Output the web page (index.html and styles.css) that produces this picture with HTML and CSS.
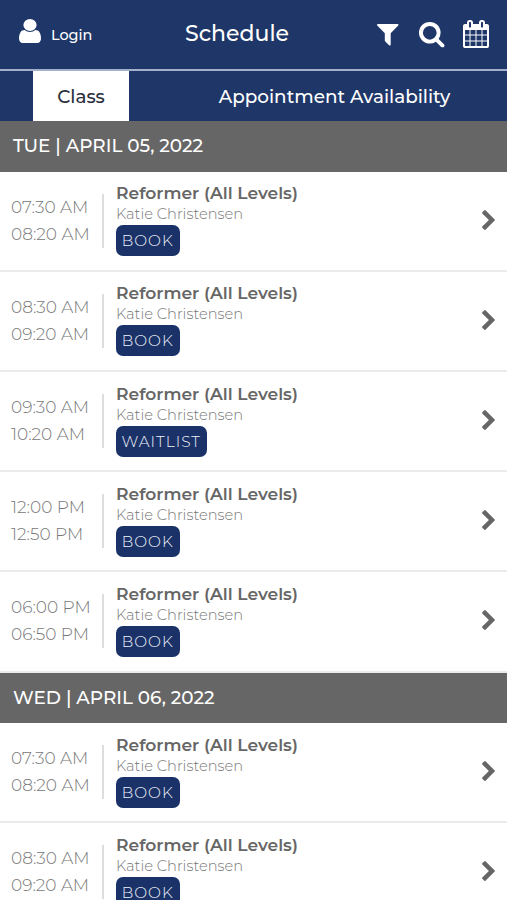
FILE: index.html
```html
<!DOCTYPE html>
<html lang="en">
<head>
    <meta charset="UTF-8">
    <meta name="viewport" content="width=device-width, initial-scale=1.0">
    <title>Schedule</title>
    <link rel="stylesheet" href="styles.css">
</head>
<body>

    <!-- Icons -->
    <svg class="sprite" xmlns="http://www.w3.org/2000/svg">
        <symbol id="user" viewBox="256 128 1280 1536" preserveAspectRatio="none"><path d="M1536 1399q0 109-62.5 187t-150.5 78h-854q-88 0-150.5-78t-62.5-187q0-85 8.5-160.5t31.5-152 58.5-131 94-89 134.5-34.5q131 128 313 128t313-128q76 0 134.5 34.5t94 89 58.5 131 31.5 152 8.5 160.5zm-256-887q0 159-112.5 271.5t-271.5 112.5-271.5-112.5-112.5-271.5 112.5-271.5 271.5-112.5 271.5 112.5 112.5 271.5z"/></symbol>
        <symbol id="filter" viewBox="0 0 1792 1792"><path d="M1595 295q17 41-14 70l-493 493v742q0 42-39 59-13 5-25 5-27 0-45-19l-256-256q-19-19-19-45v-486l-493-493q-31-29-14-70 17-39 59-39h1280q42 0 59 39z"/></symbol>
        <symbol id="search" viewBox="0 0 1792 1792"><path d="M1216 832q0-185-131.5-316.5t-316.5-131.5-316.5 131.5-131.5 316.5 131.5 316.5 316.5 131.5 316.5-131.5 131.5-316.5zm512 832q0 52-38 90t-90 38q-54 0-90-38l-343-342q-179 124-399 124-143 0-273.5-55.5t-225-150-150-225-55.5-273.5 55.5-273.5 150-225 225-150 273.5-55.5 273.5 55.5 225 150 150 225 55.5 273.5q0 220-124 399l343 343q37 37 37 90z"/></symbol>
        <symbol id="calendar" viewBox="0 0 1792 1792"><path d="M192 1664h288v-288h-288v288zm352 0h320v-288h-320v288zm-352-352h288v-320h-288v320zm352 0h320v-320h-320v320zm-352-384h288v-288h-288v288zm736 736h320v-288h-320v288zm-384-736h320v-288h-320v288zm768 736h288v-288h-288v288zm-384-352h320v-320h-320v320zm-352-864v-288q0-13-9.5-22.5t-22.5-9.5h-64q-13 0-22.5 9.5t-9.5 22.5v288q0 13 9.5 22.5t22.5 9.5h64q13 0 22.5-9.5t9.5-22.5zm736 864h288v-320h-288v320zm-384-384h320v-288h-320v288zm384 0h288v-288h-288v288zm32-480v-288q0-13-9.5-22.5t-22.5-9.5h-64q-13 0-22.5 9.5t-9.5 22.5v288q0 13 9.5 22.5t22.5 9.5h64q13 0 22.5-9.5t9.5-22.5zm384-64v1280q0 52-38 90t-90 38h-1408q-52 0-90-38t-38-90v-1280q0-52 38-90t90-38h128v-96q0-66 47-113t113-47h64q66 0 113 47t47 113v96h384v-96q0-66 47-113t113-47h64q66 0 113 47t47 113v96h128q52 0 90 38t38 90z"/></symbol>
        <symbol id="chevron" viewBox="346 26 1036 1612"><path d="M1363 877l-742 742q-19 19-45 19t-45-19l-166-166q-19-19-19-45t19-45l531-531-531-531q-19-19-19-45t19-45l166-166q19-19 45-19t45 19l742 742q19 19 19 45t-19 45z"/></symbol>
    </svg>

    <!-- Header -->
    <header class="header">
        <a class="login" href="#">
            <svg class="icon-user"><use href="#user"/></svg>
            <span>Login</span>
        </a>
        <h1>Schedule</h1>
        <div class="actions">
            <svg class="icon"><use href="#filter"/></svg>
            <svg class="icon"><use href="#search"/></svg>
            <svg class="icon icon-cal"><use href="#calendar"/></svg>
        </div>
    </header>

    <!-- Tabs -->
    <nav class="tabs">
        <a class="tab active" href="#">Class</a>
        <a class="tab tab-wide" href="#">Appointment Availability</a>
    </nav>

    <h2 class="date">TUE | APRIL 05, 2022</h2>
    <div class="row">
        <div class="time"><span>07:30 AM</span><span>08:20 AM</span></div>
        <div class="info">
            <h3>Reformer (All Levels)</h3>
            <p>Katie Christensen</p>
            <button class="btn">BOOK</button>
        </div>
        <svg class="chevron"><use href="#chevron"/></svg>
    </div>
    <div class="row">
        <div class="time"><span>08:30 AM</span><span>09:20 AM</span></div>
        <div class="info">
            <h3>Reformer (All Levels)</h3>
            <p>Katie Christensen</p>
            <button class="btn">BOOK</button>
        </div>
        <svg class="chevron"><use href="#chevron"/></svg>
    </div>
    <div class="row">
        <div class="time"><span>09:30 AM</span><span>10:20 AM</span></div>
        <div class="info">
            <h3>Reformer (All Levels)</h3>
            <p>Katie Christensen</p>
            <button class="btn btn-wait">WAITLIST</button>
        </div>
        <svg class="chevron"><use href="#chevron"/></svg>
    </div>
    <div class="row">
        <div class="time"><span>12:00 PM</span><span>12:50 PM</span></div>
        <div class="info">
            <h3>Reformer (All Levels)</h3>
            <p>Katie Christensen</p>
            <button class="btn">BOOK</button>
        </div>
        <svg class="chevron"><use href="#chevron"/></svg>
    </div>
    <div class="row">
        <div class="time"><span>06:00 PM</span><span>06:50 PM</span></div>
        <div class="info">
            <h3>Reformer (All Levels)</h3>
            <p>Katie Christensen</p>
            <button class="btn">BOOK</button>
        </div>
        <svg class="chevron"><use href="#chevron"/></svg>
    </div>

    <h2 class="date">WED | APRIL 06, 2022</h2>
    <div class="row">
        <div class="time"><span>07:30 AM</span><span>08:20 AM</span></div>
        <div class="info">
            <h3>Reformer (All Levels)</h3>
            <p>Katie Christensen</p>
            <button class="btn">BOOK</button>
        </div>
        <svg class="chevron"><use href="#chevron"/></svg>
    </div>
    <div class="row">
        <div class="time"><span>08:30 AM</span><span>09:20 AM</span></div>
        <div class="info">
            <h3>Reformer (All Levels)</h3>
            <p>Katie Christensen</p>
            <button class="btn">BOOK</button>
        </div>
        <svg class="chevron"><use href="#chevron"/></svg>
    </div>

</body>
</html>
```

FILE: styles.css
```css
* {
    box-sizing: border-box;
}

body {
    margin: 0;
    height: 900px;
    overflow: hidden;
    background: #fff;
    color: #666;
    font-family: Montserrat, Inter, sans-serif;
}

h1, h2, h3, p {
    margin: 0;
}

a {
    color: inherit;
    text-decoration: none;
}

svg {
    display: block;
    flex: none;
    fill: currentColor;
}

.sprite {
    display: none;
}

/* Header */
.header {
    display: grid;
    grid-template-columns: 185px 1fr auto;
    align-items: center;
    height: 71px;
    padding: 0 17px 2px 0;
    border-bottom: 2px solid #a3b0ca;
    background: #1f3768;
    color: #fff;
}

.login {
    display: flex;
    align-items: center;
    gap: 10px;
    padding: 0 0 5px 19px;
    font-size: 14.4px;
    font-weight: 500;
}

.login span {
    padding-top: 8px;
}

.icon-user {
    width: 22px;
    height: 24px;
}

h1 {
    font-size: 22px;
    font-weight: 500;
}

.actions {
    display: flex;
    gap: 16px;
    padding-top: 1px;
}

.icon {
    width: 27.5px;
    height: 27.5px;
}

.icon-cal {
    width: 28px;
    height: 28px;
    margin-left: 1px;
}

/* Tabs */
.tabs {
    display: flex;
    height: 50px;
    padding-left: 33px;
    background: #1f3768;
    color: #fff;
    font-size: 18.4px;
    font-weight: 500;
}

.tab {
    display: flex;
    align-items: center;
    justify-content: center;
    width: 96px;
    white-space: nowrap;
}

.tab-wide {
    flex: 1;
    padding-right: 38px;
    padding-left: 71px;
}

.tab.active {
    background: #fff;
    color: #2b3040;
}

/* Day heading */
.date {
    height: 50.6px;
    padding-left: 13px;
    background: #666;
    color: #fff;
    font-size: 18.4px;
    font-weight: 500;
    line-height: 50px;
}

/* Class rows */
.row {
    display: flex;
    align-items: center;
    height: 100.2px;
    padding-right: 12px;
    border-bottom: 2px solid #ebebeb;
}

.time {
    display: flex;
    flex-direction: column;
    width: 104px;
    height: 54px;
    padding-left: 11px;
    border-right: 2px solid #ddd;
    color: #777;
    font-size: 17px;
    font-weight: 300;
    line-height: 27px;
    white-space: nowrap;
}

.info {
    flex: 1;
    padding: 0 0 3px 12px;
}

h3 {
    font-size: 17.1px;
    font-weight: 600;
    line-height: 21px;
    padding-bottom: 1px;
}

p {
    color: #777;
    font-size: 14.65px;
    font-weight: 300;
    line-height: 21px;
}

.btn {
    display: block;
    width: 63.5px;
    height: 31px;
    padding: 0;
    border: 0;
    border-radius: 7px;
    background: #1b3268;
    color: #eef2fa;
    font: 300 15.3px/31px Montserrat, Inter, sans-serif;
    letter-spacing: 1px;
    text-align: center;
}

.btn-wait {
    width: 90.5px;
}

.chevron {
    width: 13px;
    height: 20px;
    margin-top: -2px;
}
```
